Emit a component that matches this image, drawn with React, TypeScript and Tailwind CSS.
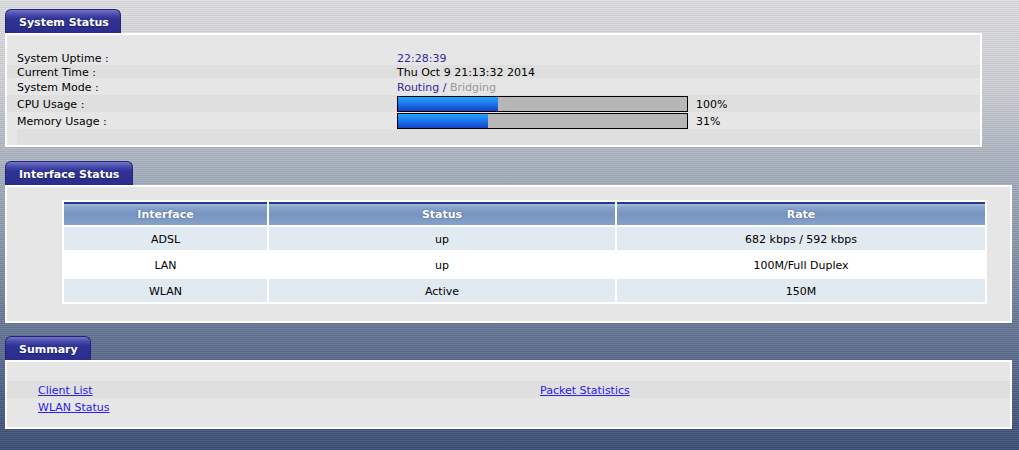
const font = "font-['DejaVu_Sans','Verdana',sans-serif]";

const Tab = ({ title, width }: { title: string; width: string }) => (
  <div
    className={`${width} h-[24px] flex items-center pl-[13px] pt-[3px] rounded-t-[6px] border border-b-0 border-[#23266f] bg-[linear-gradient(to_bottom,#7375c9_0px,#4d4fb0_4px,#2f3194_9px,#2c2e8e_100%)] text-white text-[11px] font-bold [text-shadow:0_1px_1px_rgba(0,0,0,0.35)]`}
  >
    {title}
  </div>
);

const Bar = ({ fill, label }: { fill: number; label: string }) => (
  <div className="flex items-center h-full">
    <div className="w-[291px] h-[16px] border border-black bg-[#b7b7b7] flex">
      <div
        className="h-full bg-[linear-gradient(to_bottom,#22a6ff,#1b74ec_50%,#1a3fc6)]"
        style={{ width: fill }}
      />
    </div>
    <span className="ml-[8px] pt-[2px]">{label}</span>
  </div>
);

const statusRows = [
  { label: 'System Uptime :', h: 'h-[16px]', bg: '', value: <span className="text-[#33289a] pt-[2px]">22:28:39</span> },
  { label: 'Current Time :', h: 'h-[13px]', bg: 'bg-[#dfdfdf]', value: <span className="pt-[2px]">Thu Oct 9 21:13:32 2014</span> },
  {
    label: 'System Mode :',
    h: 'h-[17px]',
    bg: '',
    value: (
      <span className="pt-[2px]">
        <span className="text-[#33289a]">Routing / </span>
        <span className="text-[#999999]">Bridging</span>
      </span>
    ),
  },
  { label: 'CPU Usage :', h: 'h-[17px]', bg: 'bg-[#dfdfdf]', value: <Bar fill={100} label="100%" /> },
  { label: 'Memory Usage :', h: 'h-[17px]', bg: '', value: <Bar fill={90} label="31%" /> },
];

const ifaces = [
  { name: 'ADSL', status: 'up', rate: '682 kbps / 592 kbps', row: 'h-[23px] bg-[#e1e9f1]' },
  { name: 'LAN', status: 'up', rate: '100M/Full Duplex', row: 'h-[25px] bg-white' },
  { name: 'WLAN', status: 'Active', rate: '150M', row: 'h-[23px] bg-[#e1e9f1]' },
];

export default function App() {
  return (
    <div
      className={`${font} min-h-screen pt-[9px] pl-[5px] pr-[7px] text-[11px] text-black bg-[image:repeating-linear-gradient(to_bottom,rgba(255,255,255,0.07)_0px,rgba(255,255,255,0.07)_1px,rgba(0,0,0,0.07)_1px,rgba(0,0,0,0.07)_2px),linear-gradient(to_bottom,#e0e0e2_0%,#cdd0d5_20%,#a8b1c0_38%,#8390a8_58%,#5d6e90_78%,#3c4f77_100%)]`}
    >
      {/* System Status */}
      <section>
        <Tab title="System Status" width="w-[116px]" />
        <div className="w-[977px] border-2 border-white bg-[#e6e6e6] pt-[14px] pb-0">
          {statusRows.map((r) => (
            <div key={r.label} className={`flex items-center ${r.h} ${r.bg}`}>
              <div className="w-[390px] pl-[10px] pt-[2px] leading-none">{r.label}</div>
              <div className="flex-1 h-full flex items-center leading-none">{r.value}</div>
            </div>
          ))}
          <div className="h-[16px] ml-[10px] bg-[#dfdfdf]" />
        </div>
      </section>

      {/* Interface Status */}
      <section className="mt-[14px]">
        <Tab title="Interface Status" width="w-[128px]" />
        <div className="border-2 border-white bg-[#e6e6e6] pt-[13px] pb-[17px] pl-[55px] pr-[23px]">
          <div className="bg-white p-[2px] grid grid-cols-[203px_346px_1fr] gap-[2px]">
            {['Interface', 'Status', 'Rate'].map((h) => (
              <div
                key={h}
                className="h-[23px] pt-[4px] flex items-center justify-center text-white font-bold bg-[linear-gradient(to_bottom,#233b8b_0px,#233b8b_2px,#a9bcd9_2px,#8aa4cb_5px,#7794c1_12px,#86a2c9_100%)] [text-shadow:0_0_2px_rgba(40,60,120,0.6)]"
              >
                {h}
              </div>
            ))}
            {ifaces.map((r) =>
              [r.name, r.status, r.rate].map((c, i) => (
                <div key={r.name + i} className={`${r.row} pt-[4px] flex items-center justify-center`}>
                  {c}
                </div>
              ))
            )}
          </div>
        </div>
      </section>

      {/* Summary */}
      <section className="mt-[13px]">
        <Tab title="Summary" width="w-[86px]" />
        <div className="border-2 border-white bg-[#e6e6e6] pt-[19px] pb-[12px]">
          <div className="h-[17px] pt-[4px] flex items-center bg-[#dfdfdf]">
            <div className="w-[533px] pl-[31px]">
              <a href="#" className="text-[#2a20f0] underline">Client List</a>
            </div>
            <a href="#" className="text-[#2a20f0] underline">Packet Statistics</a>
          </div>
          <div className="h-[17px] pt-[4px] flex items-center">
            <div className="w-[533px] pl-[31px]">
              <a href="#" className="text-[#2a20f0] underline">WLAN Status</a>
            </div>
          </div>
        </div>
      </section>
    </div>
  );
}
